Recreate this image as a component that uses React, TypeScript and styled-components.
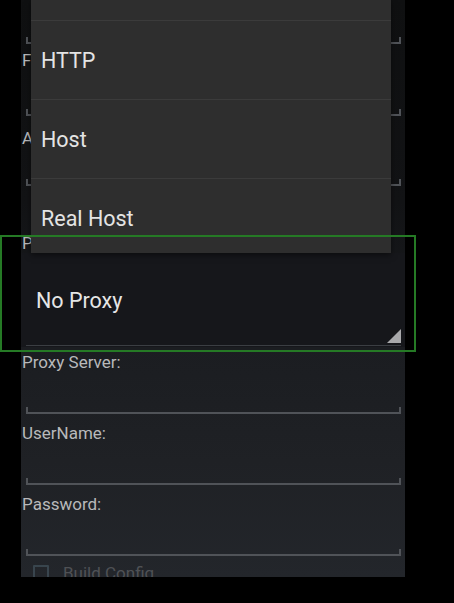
import React from "react";
import styled, { createGlobalStyle } from "styled-components";

const Global = createGlobalStyle`
  html, body { margin: 0; padding: 0; background: #000; }
  body { font-family: Roboto, "Noto Sans", "Liberation Sans", sans-serif; }
  * { box-sizing: border-box; }
`;

const Stage = styled.div`
  position: relative;
  width: 454px;
  height: 603px;
  background: #000;
  overflow: hidden;
`;

const Phone = styled.div`
  margin-left: 21px;
  width: 384px;
  height: 577px;
  overflow: hidden;
  display: flex;
  flex-direction: column;
  background: linear-gradient(
    to bottom,
    #0f1011 0%,
    #121315 35%,
    #1b1d21 60%,
    #1f2125 80%,
    #23262b 100%
  );
`;

const Field = styled.div<{ $gap: number }>`
  display: flex;
  flex-direction: column;
  margin-top: ${(p) => p.$gap}px;
  flex-shrink: 0;
`;

const Label = styled.div`
  height: 20px;
  line-height: 20px;
  padding-left: 1px;
  font-size: 17px;
  color: #b8b9bb;
  white-space: nowrap;
`;

const Input = styled.div<{ $h: number }>`
  position: relative;
  height: ${(p) => p.$h}px;
  margin: 0 4px 0 5px;
  border-bottom: 2px solid #505358;
  &::before,
  &::after {
    content: "";
    position: absolute;
    bottom: 0;
    width: 2px;
    height: 5px;
    background: #505358;
  }
  &::before { left: 0; }
  &::after { right: 0; }
`;

const Spinner = styled.div`
  position: relative;
  height: 94px;
  display: flex;
  align-items: center;
  padding-left: 15px;
  background: #16171b;
  font-size: 21.5px;
  color: #e6e6e6;
  &::after {
    content: "";
    position: absolute;
    right: 4px;
    bottom: 4px;
    width: 14px;
    height: 14px;
    background: #a9a9ab;
    clip-path: polygon(100% 0, 100% 100%, 0 100%);
  }
`;

const SpinnerLine = styled.div`
  position: absolute;
  left: 5px;
  right: 4px;
  bottom: 1px;
  height: 1px;
  background: #3b3e43;
`;

const CheckRow = styled.div`
  margin-top: 7px;
  display: flex;
  align-items: center;
  gap: 14px;
  padding-left: 12px;
  opacity: 0.3;
  flex-shrink: 0;
`;

const CheckBox = styled.div`
  width: 16px;
  height: 16px;
  border: 2px solid #6d8fa0;
  border-radius: 1px;
`;

const CheckText = styled.span`
  font-size: 17px;
  color: #b4b5b7;
`;

const Dropdown = styled.div`
  position: absolute;
  left: 31px;
  top: 0;
  width: 360px;
  height: 253px;
  overflow: hidden;
  background: #2e2e2e;
  box-shadow: 0 2px 6px rgba(0, 0, 0, 0.5);
`;

const List = styled.div`
  margin-top: -58px;
  display: flex;
  flex-direction: column;
`;

const Item = styled.div`
  height: 79px;
  flex-shrink: 0;
  display: flex;
  align-items: center;
  padding-left: 10px;
  border-bottom: 1px solid #3b3b3b;
  font-size: 21.5px;
  color: #e4e4e4;
`;

const Highlight = styled.div`
  position: absolute;
  left: 0;
  top: 235px;
  width: 416px;
  height: 117px;
  border: 2px solid #257a25;
  pointer-events: none;
`;

const fields = [
  { label: "Proxy Server:", gap: 5 },
  { label: "UserName:", gap: 9 },
  { label: "Password:", gap: 9 },
];

const options = ["", "HTTP", "Host", "Real Host"];

export default function App() {
  return (
    <>
      <Global />
      <Stage>
        <Phone>
          <Field $gap={0}>
            <Input $h={44} />
          </Field>
          <Field $gap={6}>
            <Label>F</Label>
            <Input $h={46} />
          </Field>
          <Field $gap={12}>
            <Label>A</Label>
            <Input $h={38} />
          </Field>
          <Field $gap={47}>
            <Label>P</Label>
            <Spinner>
              No Proxy
              <SpinnerLine />
            </Spinner>
          </Field>
          {fields.map((f) => (
            <Field key={f.label} $gap={f.gap}>
              <Label>{f.label}</Label>
              <Input $h={42} />
            </Field>
          ))}
          <CheckRow>
            <CheckBox />
            <CheckText>Build Config</CheckText>
          </CheckRow>
        </Phone>
        <Dropdown>
          <List>
            {options.map((t, i) => (
              <Item key={i}>{t}</Item>
            ))}
          </List>
        </Dropdown>
        <Highlight />
      </Stage>
    </>
  );
}
